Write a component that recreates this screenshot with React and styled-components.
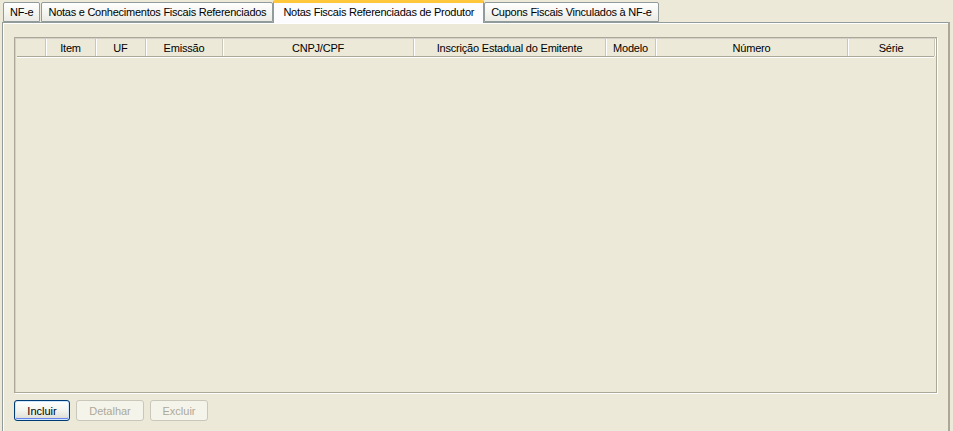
import React, { useState } from 'react';
import styled, { createGlobalStyle } from 'styled-components';

const GlobalStyle = createGlobalStyle`
  html, body {
    margin: 0;
    padding: 0;
    background: #ece9d8;
  }
  body {
    font-family: "Liberation Sans", "DejaVu Sans", sans-serif;
    font-size: 11px;
    color: #000;
  }
`;

const Window = styled.div`
  width: 953px;
  height: 431px;
  background: #ece9d8;
  overflow: hidden;
  display: flex;
  flex-direction: column;
  box-sizing: border-box;
  padding: 0 3px 0 2px;
  font-family: "Liberation Sans", "DejaVu Sans", sans-serif;
  font-size: 11px;
`;

const TabBar = styled.div`
  display: flex;
  align-items: flex-end;
  height: 22px;
  padding-left: 1px;
  position: relative;
  z-index: 1;
`;

const Tab = styled.div`
  box-sizing: border-box;
  height: ${p => (p.$active ? '23px' : '20px')};
  margin-bottom: ${p => (p.$active ? '-1px' : '0')};
  margin-right: ${p => (p.$active ? '0' : '1px')};
  margin-left: ${p => (p.$active ? '-1px' : '0')};
  padding: 0 ${p => (p.$active ? '9px' : '6px')};
  display: flex;
  align-items: center;
  white-space: nowrap;
  letter-spacing: -0.25px;
  border: 1px solid #919b9c;
  border-bottom: ${p => (p.$active ? 'none' : '1px solid #919b9c')};
  border-top: ${p => (p.$active ? '3px solid #ffc83c' : '1px solid #919b9c')};
  border-radius: 2px 2px 0 0;
  background: ${p =>
    p.$active ? '#fcfcfe' : 'linear-gradient(#ffffff, #f3f3ef 60%, #ecebe6)'};
  padding-bottom: ${p => (p.$active ? '2px' : '0')};
  cursor: default;
`;

const Panel = styled.div`
  flex: 1;
  border: 1px solid #919b9c;
  border-right: 2px solid #aca899;
  box-shadow: inset 1px 1px 0 #fff;
  padding: 14px 11px 0 10px;
  display: flex;
  flex-direction: column;
  min-height: 430px;
`;

const ScrollPane = styled.div`
  box-sizing: border-box;
  height: 356px;
  margin-left: 1px;
  border: 1px solid #aca899;
  box-shadow: inset 1px 1px 0 #d4d0c8, 1px 1px 0 #fff;
  padding: 1px 2px 2px;
  background: #ece9d8;
  display: flex;
  flex-direction: column;
`;

const HeaderRow = styled.div`
  display: grid;
  grid-template-columns: ${p => p.$cols};
  height: 17px;
  border-bottom: 1px solid #aca899;
  box-shadow: 0 1px 0 #fff;
  background: #ece9d8;
`;

const HeaderCell = styled.div`
  display: flex;
  align-items: center;
  justify-content: center;
  white-space: nowrap;
  letter-spacing: -0.2px;
  border-right: 1px solid #c9c7ba;
  box-shadow: 1px 0 0 #fff;
`;

const ButtonRow = styled.div`
  display: flex;
  gap: 6px;
  padding-top: 7px;
  margin-left: 1px;
`;

const Button = styled.button`
  box-sizing: border-box;
  height: 21px;
  width: ${p => p.$w}px;
  font-family: "Liberation Sans", "DejaVu Sans", sans-serif;
  font-size: 11px;
  padding: 0;
  border-radius: 3px;
  border: 1px solid ${p => (p.disabled ? '#c9c7ba' : '#003c74')};
  color: ${p => (p.disabled ? '#aca899' : '#000')};
  background: ${p =>
    p.disabled
      ? '#f5f4ea'
      : 'linear-gradient(#ffffff, #f3f3ef 50%, #e3e3dc 85%, #d6d0c5)'};
  box-shadow: ${p =>
    p.disabled ? 'none' : 'inset 0 0 0 1px #cee7ff, inset 0 -1px 0 1px #6982ee'};
`;

const columns = [
  { label: '', w: 29 },
  { label: 'Item', w: 50 },
  { label: 'UF', w: 50 },
  { label: 'Emissão', w: 77 },
  { label: 'CNPJ/CPF', w: 191 },
  { label: 'Inscrição Estadual do Emitente', w: 192 },
  { label: 'Modelo', w: 50 },
  { label: 'Número', w: 192 },
  { label: 'Série', w: 87 },
];

const tabs = [
  'NF-e',
  'Notas e Conhecimentos Fiscais Referenciados',
  'Notas Fiscais Referenciadas de Produtor',
  'Cupons Fiscais Vinculados à NF-e',
];

const App = () => {
  const [active, setActive] = useState(2);
  const cols = columns.map(c => c.w + 'px').join(' ') + ' 1fr';

  return (
    <>
      <GlobalStyle />
      <Window>
        <TabBar>
          {tabs.map((t, i) => (
            <Tab key={t} $active={i === active} onClick={() => setActive(i)}>
              {t}
            </Tab>
          ))}
        </TabBar>
        <Panel>
          <ScrollPane>
            <HeaderRow $cols={cols}>
              {columns.map((c, i) => (
                <HeaderCell key={i}>{c.label}</HeaderCell>
              ))}
            </HeaderRow>
          </ScrollPane>
          <ButtonRow>
            <Button $w={56}>Incluir</Button>
            <Button $w={68} disabled>Detalhar</Button>
            <Button $w={58} disabled>Excluir</Button>
          </ButtonRow>
        </Panel>
      </Window>
    </>
  );
};

export default App;
